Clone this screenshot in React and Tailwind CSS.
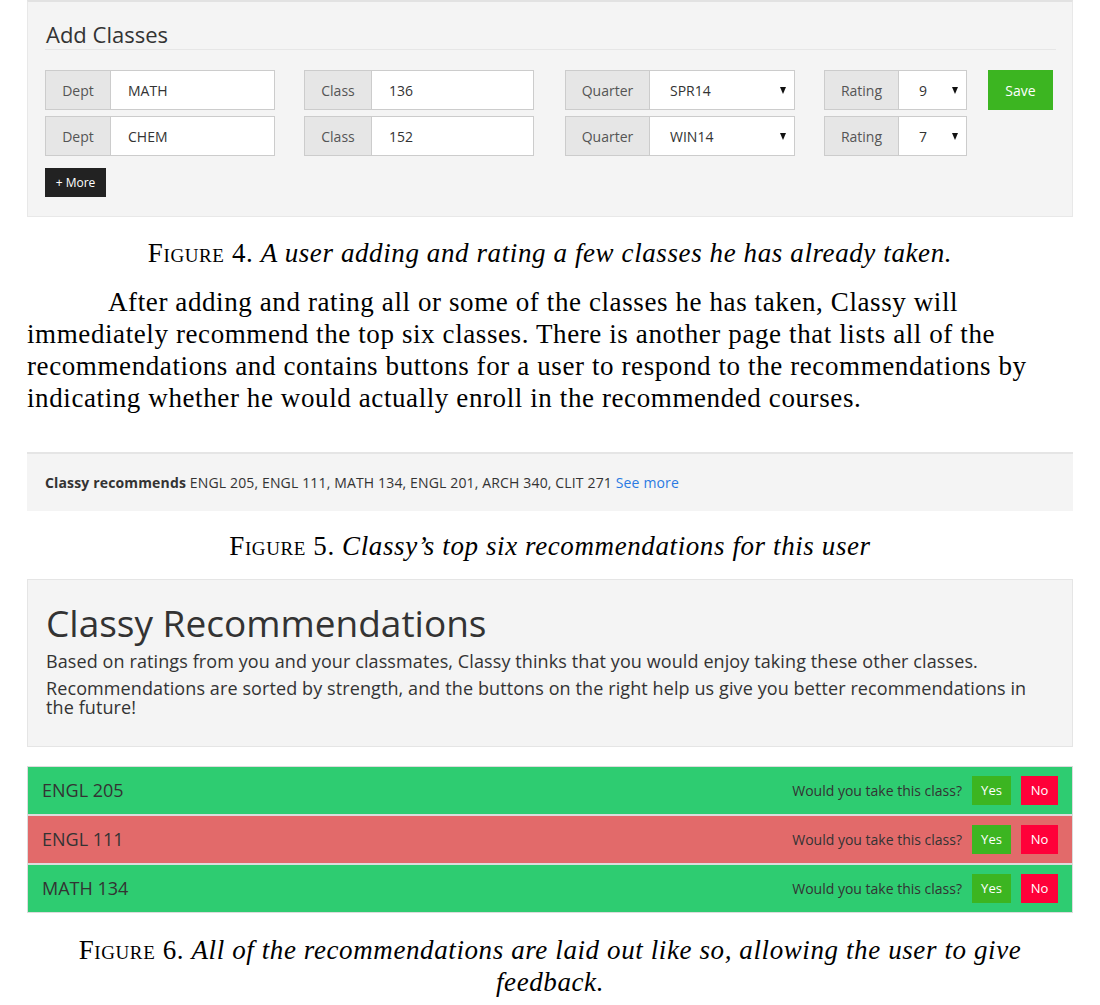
import React from 'react';

const ui = "font-['Open_Sans',sans-serif]";
const serif = "font-['Liberation_Serif',serif] text-[27px] leading-[32px] tracking-[0.6px] text-black";

function Caret() {
  return (
    <svg width="6" height="7" viewBox="0 0 6 7" className="absolute right-[8px] top-[16px]">
      <path d="M0 0 L6 0 L3 7 Z" fill="#111" />
    </svg>
  );
}

function Group({ label, value, addonW, inputW, select }) {
  return (
    <div className="flex h-[40px] border border-[#ccc]">
      <div className={`flex items-center justify-center bg-[#e6e6e6] border-r border-[#ccc] text-[14px] text-[#555] ${addonW}`}>{label}</div>
      <div className={`relative flex items-center bg-white text-[14px] text-[#333] ${select ? 'pl-[20px]' : 'pl-[17px]'} ${inputW}`}>
        {value}
        {select && <Caret />}
      </div>
    </div>
  );
}

function FormRow({ dept, cls, quarter, rating, save }) {
  return (
    <div className="flex items-center">
      <Group label="Dept" value={dept} addonW="w-[65px]" inputW="w-[163px]" />
      <div className="ml-[29px]"><Group label="Class" value={cls} addonW="w-[67px]" inputW="w-[161px]" /></div>
      <div className="ml-[31px]"><Group label="Quarter" value={quarter} addonW="w-[84px]" inputW="w-[144px]" select /></div>
      <div className="ml-[29px]"><Group label="Rating" value={rating} addonW="w-[74px]" inputW="w-[67px]" select /></div>
      {save && <button className="ml-[21px] h-[40px] w-[65px] bg-[#3cb521] text-white text-[14px]">Save</button>}
    </div>
  );
}

function RecRow({ name, color }) {
  return (
    <div className={`flex items-center justify-between h-[49px] border border-[#dcdcdc] pl-[14px] pr-[14px] ${color}`}>
      <span className="text-[18px] text-[#333]">{name}</span>
      <div className="flex items-center">
        <span className="text-[14px] text-[#333]">Would you take this class?</span>
        <button className="ml-[10px] h-[29px] w-[39px] bg-[#3cb521] text-white text-[13px]">Yes</button>
        <button className="ml-[10px] h-[29px] w-[37px] bg-[#ff0039] text-white text-[13px]">No</button>
      </div>
    </div>
  );
}

export default function App() {
  return (
    <div className="w-[1100px] min-h-[1005px] bg-white pb-[10px]">
      {/* figure 4 */}
      <div className={`mx-[27px] bg-[#f4f4f4] border border-[#e8e8e8] border-t-2 border-t-[#e2e2e2] pt-[18px] pl-[17px] pr-[16px] pb-[19px] ${ui}`}>
        <div className="h-[30px] border-b border-[#e6e6e6] pl-[1px] text-[22px] leading-[28px] text-[#333]">Add Classes</div>
        <div className="mt-[20px] flex flex-col gap-[6px]">
          <FormRow dept="MATH" cls="136" quarter="SPR14" rating="9" save />
          <FormRow dept="CHEM" cls="152" quarter="WIN14" rating="7" />
        </div>
        <button className="mt-[12px] h-[29px] w-[61px] bg-[#222] text-white text-[12px]">+ More</button>
      </div>

      <p className={`mt-[20px] text-center ${serif}`}>
        <span className="[font-variant:small-caps]">Figure</span> 4. <i>A user adding and rating a few classes he has already taken.</i>
      </p>

      <p className={`mt-[17px] mx-[27px] ${serif}`}>
        <span className="pl-[81px]">After adding and rating all or some of the classes he has taken, Classy will</span><br />
        immediately recommend the top six classes. There is another page that lists all of the<br />
        recommendations and contains buttons for a user to respond to the recommendations by<br />
        indicating whether he would actually enroll in the recommended courses.
      </p>

      {/* figure 5 */}
      <div className={`mt-[38px] mx-[27px] h-[59px] bg-[#f4f4f4] border-t-2 border-[#e5e5e5] flex items-center pl-[18px] text-[14px] tracking-[0.15px] text-[#333] ${ui}`}>
        <span><b>Classy recommends</b> ENGL 205, ENGL 111, MATH 134, ENGL 201, ARCH 340, CLIT 271 <span className="text-[#2a7ae2]">See more</span></span>
      </div>

      <p className={`mt-[19px] text-center ${serif}`}>
        <span className="[font-variant:small-caps]">Figure</span> 5. <i>Classy’s top six recommendations for this user</i>
      </p>

      {/* figure 6 */}
      <div className={`mt-[17px] mx-[27px] h-[168px] bg-[#f4f4f4] border border-[#e5e5e5] pt-[21px] pl-[18px] pr-[20px] text-[#333] ${ui}`}>
        <h1 className="text-[37px] leading-[44px]">Classy Recommendations</h1>
        <p className="mt-[6px] text-[18px] leading-[20px] tracking-[0.1px]">Based on ratings from you and your classmates, Classy thinks that you would enjoy taking these other classes.</p>
        <p className="mt-[8px] text-[18px] leading-[19px] tracking-[0.1px]">Recommendations are sorted by strength, and the buttons on the right help us give you better recommendations in the future!</p>
      </div>

      <div className={`mt-[19px] mx-[27px] ${ui}`}>
        <RecRow name="ENGL 205" color="bg-[#2ecc71]" />
        <RecRow name="ENGL 111" color="bg-[#e26a6a]" />
        <RecRow name="MATH 134" color="bg-[#2ecc71]" />
      </div>

      <p className={`mt-[21px] text-center ${serif}`}>
        <span className="[font-variant:small-caps]">Figure</span> 6. <i>All of the recommendations are laid out like so, allowing the user to give</i><br />
        <i>feedback.</i>
      </p>
    </div>
  );
}
